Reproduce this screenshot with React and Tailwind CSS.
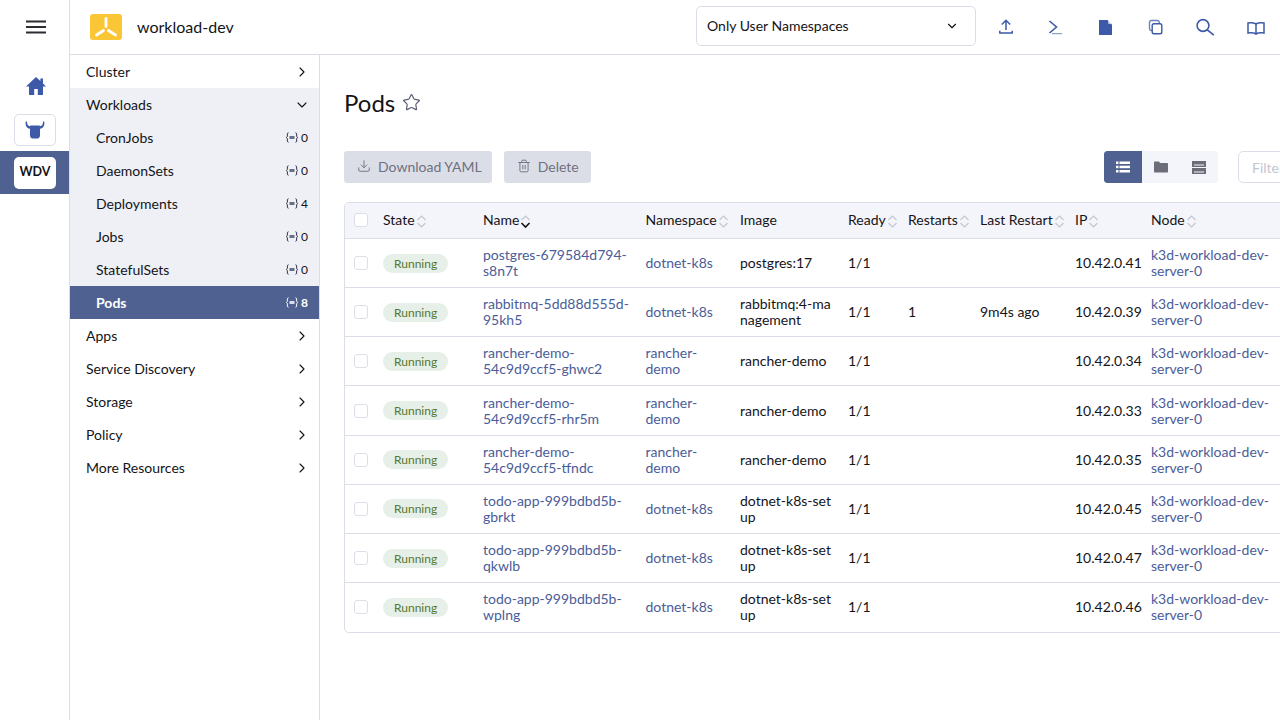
import { ChevronRight, ChevronDown, Star, Download, Trash2 } from "lucide-react";

const navTop = ["Cluster"];
const workloads = [
  { name: "CronJobs", count: 0 },
  { name: "DaemonSets", count: 0 },
  { name: "Deployments", count: 4 },
  { name: "Jobs", count: 0 },
  { name: "StatefulSets", count: 0 },
  { name: "Pods", count: 8, active: true },
];
const navBottom = ["Apps", "Service Discovery", "Storage", "Policy", "More Resources"];

const pods = [
  { name: ["postgres-679584d794-", "s8n7t"], ns: ["dotnet-k8s"], image: ["postgres:17"], ip: "10.42.0.41" },
  { name: ["rabbitmq-5dd88d555d-", "95kh5"], ns: ["dotnet-k8s"], image: ["rabbitmq:4-ma", "nagement"], restarts: "1", last: "9m4s ago", ip: "10.42.0.39" },
  { name: ["rancher-demo-", "54c9d9ccf5-ghwc2"], ns: ["rancher-", "demo"], image: ["rancher-demo"], ip: "10.42.0.34" },
  { name: ["rancher-demo-", "54c9d9ccf5-rhr5m"], ns: ["rancher-", "demo"], image: ["rancher-demo"], ip: "10.42.0.33" },
  { name: ["rancher-demo-", "54c9d9ccf5-tfndc"], ns: ["rancher-", "demo"], image: ["rancher-demo"], ip: "10.42.0.35" },
  { name: ["todo-app-999bdbd5b-", "gbrkt"], ns: ["dotnet-k8s"], image: ["dotnet-k8s-set", "up"], ip: "10.42.0.45" },
  { name: ["todo-app-999bdbd5b-", "qkwlb"], ns: ["dotnet-k8s"], image: ["dotnet-k8s-set", "up"], ip: "10.42.0.47" },
  { name: ["todo-app-999bdbd5b-", "wplng"], ns: ["dotnet-k8s"], image: ["dotnet-k8s-set", "up"], ip: "10.42.0.46" },
];

const columns = [
  { label: "State", width: "w-[100px]", sort: true },
  { label: "Name", width: "w-[162.5px]", sort: true, sorted: true },
  { label: "Namespace", width: "w-[94.5px]", sort: true },
  { label: "Image", width: "w-[108px]" },
  { label: "Ready", width: "w-[60px]", sort: true },
  { label: "Restarts", width: "w-[72px]", sort: true },
  { label: "Last Restart", width: "w-[95px]", sort: true },
  { label: "IP", width: "w-[76px]", sort: true },
  { label: "Node", width: "w-[180px]", sort: true },
];

const Lines = ({ lines }) => lines.map((l) => <div key={l} className="whitespace-nowrap">{l}</div>);

const SortIcon = ({ sorted }) => (
  <svg width="11" height="15" viewBox="0 0 11 15" fill="none" className="ml-[1px] mt-[2px] shrink-0">
    <path d="M1.5 6 5.5 2l4 4" stroke="#c3c6d2" strokeWidth="1.2" />
    <path d="M1.5 9l4 4 4-4" stroke={sorted ? "#141419" : "#c3c6d2"} strokeWidth={sorted ? 1.6 : 1.2} />
  </svg>
);

const Checkbox = () => (
  <div className="w-[14px] h-[14px] rounded-[3px] border border-[#dcdee7] bg-white" />
);

const ResourceGlyph = ({ active }) => (
  <svg width="12" height="11" viewBox="0 0 12 11" fill="none" stroke={active ? "#ffffff" : "#2f2f4a"} strokeWidth="1">
    <path d="M2.500.8C1.300.8 1.400 1.500 1.400 3c0 1.500-.3 2.200-1 2.500.7.300 1 1 1 2.500 0 1.500-.1 2.200 1.100 2.200" />
    <path d="M9.500.8c1.200 0 1.100.7 1.100 2.200 0 1.500.3 2.200 1 2.500-.7.300-1 1-1 2.500 0 1.500.1 2.200-1.100 2.200" />
    <rect x="3.500" y="4" width="5" height="3" fill={active ? "#d8dcec" : "#6b6f85"} stroke="none" />
  </svg>
);

const NavGroup = ({ label, open }) => (
  <div className={`h-[33px] flex items-center justify-between pl-4 pr-[9px] text-[14px] text-[#141419] ${open ? "bg-[#eef0f5]" : ""}`}>
    <span>{label}</span>
    {open ? (
      <ChevronDown size={16} strokeWidth={1.7} />
    ) : (
      <ChevronRight size={16} strokeWidth={1.7} />
    )}
  </div>
);

const Sidebar = () => (
  <nav className="w-[250px] shrink-0 border-r border-[#dcdee7]">
    {navTop.map((n) => (
      <NavGroup key={n} label={n} />
    ))}
    <NavGroup label="Workloads" open />
    <div className="bg-[#eef0f5]">
      {workloads.map((w) => (
        <div
          key={w.name}
          className={`h-[33px] flex items-center justify-between pl-[26px] pr-[11px] text-[14px] ${
            w.active ? "bg-[#4f6190] text-white font-bold" : "text-[#141419]"
          }`}
        >
          <span>{w.name}</span>
          <span className="flex items-center gap-[3px] text-[12px]">
            <ResourceGlyph active={w.active} />
            {w.count}
          </span>
        </div>
      ))}
    </div>
    {navBottom.map((n) => (
      <NavGroup key={n} label={n} />
    ))}
  </nav>
);

const Rail = () => (
  <aside className="w-[70px] shrink-0 border-r border-[#dcdee7] flex flex-col items-center">
    <div className="h-[54px] flex items-center justify-center pl-[2px]">
      <svg width="20" height="14" viewBox="0 0 20 14" fill="#2c2c33">
        <rect x="0" y="0.5" width="20" height="2" />
        <rect x="0" y="6" width="20" height="2" />
        <rect x="0" y="11.5" width="20" height="2" />
      </svg>
    </div>
    <div className="h-[60px] flex items-center justify-center pl-[2px]">
      <svg width="22" height="20" viewBox="0 0 22 20" fill="#3d5aa8" className="mt-[3px]">
        <path d="M11 1 1 10.5h3V19h5.2v-6h3.6v6H18v-8.5h3L18 7.6V2.5h-2.6v2.6z" />
      </svg>
    </div>
    <div className="w-[42px] h-[32px] rounded-[5px] border border-[#dcdee7] flex items-center justify-center">
      <svg width="22" height="18" viewBox="0 0 22 18" fill="#3d5aa8">
        <path d="M6 5.500c0-.6.4-1 1-1h8c.6 0 1 .4 1 1V14c0 2-1 3.500-2.500 3.500h-5C7 17.500 6 16 6 14z" />
        <path d="M1.800.5C1 4 2.500 7.200 6 7.800V5.200C4 5 3 3.500 3 .5z" />
        <path d="M20.200.5C21 4 19.500 7.200 16 7.800V5.200C18 5 19 3.500 19 .5z" />
      </svg>
    </div>
    <div className="mt-[5px] w-full h-[43px] bg-[#4f6190] flex items-center justify-center">
      <div className="w-[42px] h-[32px] bg-white rounded-[5px] flex items-center justify-center pl-[1px] text-[12.5px] font-bold text-[#141419]">
        WDV
      </div>
    </div>
  </aside>
);

const Header = () => (
  <header className="h-[55px] border-b border-[#dcdee7] flex items-center shrink-0">
    <div className="ml-[20px] w-[32px] h-[26px] rounded-[3px] bg-[#fbc636]">
      <svg width="32" height="26" viewBox="0 0 32 26" stroke="white" strokeWidth="2.8" strokeLinecap="round" fill="none">
        <path d="M16 4.500V12.500M13.500 16.500 6.500 21M18.500 16.500l7 4.500" />
      </svg>
    </div>
    <div className="ml-[15px] text-[16px] text-[#141419]">workload-dev</div>
    <div className="ml-auto mb-[2px] w-[280px] h-[40px] rounded-[5px] border border-[#dcdee7] flex items-center justify-between pl-[10px] pr-[16px] text-[14px] text-[#141419]">
      <span className="-mt-[1px]">Only User Namespaces</span>
      <ChevronDown size={14} strokeWidth={2} />
    </div>
    <div className="flex items-center ml-[5px] -mr-[1px] text-[#3d5aa8] mb-[2px] [&>div]:w-[50px] [&>div]:flex [&>div]:justify-center">
      <div>
        <svg width="20" height="20" viewBox="0 0 20 20" fill="none" stroke="currentColor" strokeWidth="1.5">
          <path d="M10 14V4.500M5.800 8.500 10 4.300l4.200 4.200M3.800 14.800v2.300h12.400v-2.300" />
        </svg>
      </div>
      <div>
        <svg width="20" height="20" viewBox="0 0 20 20" fill="none" stroke="currentColor">
          <path d="M3.500 5 10.500 11 3.500 17" strokeWidth="1.6" />
          <path d="M6 17.700H16" strokeWidth="1" opacity="0.7" />
        </svg>
      </div>
      <div>
        <svg width="20" height="20" viewBox="0 0 20 20" fill="currentColor">
          <path d="M3 4h8.500L16 8.500V19H3z" />
          <path d="M12.300 4.300v3.400h3.400z" fill="#e8ebf6" />
        </svg>
      </div>
      <div>
        <svg width="20" height="20" viewBox="0 0 20 20" fill="none" stroke="currentColor" strokeWidth="1.4">
          <rect x="6.200" y="7.700" width="9.600" height="10" rx="1.800" />
          <path d="M6 14.500H5.200A2 2 0 0 1 3.500 12.700V6.500A2 2 0 0 1 5.500 4.500H11.500A2 2 0 0 1 13.300 6.500V7.500" opacity="0.75" />
        </svg>
      </div>
      <div>
        <svg width="20" height="20" viewBox="0 0 20 20" fill="none" stroke="currentColor" strokeWidth="1.6">
          <circle cx="7" cy="9.500" r="5.900" />
          <path d="M11.300 13.800 17.800 19.200" />
        </svg>
      </div>
      <div>
        <svg width="20" height="20" viewBox="0 0 20 20" fill="none" stroke="currentColor" strokeWidth="1.5">
          <path d="M10 8C8 6.800 5 6.500 2 7V17c3-.5 6-.3 8 1 2-1.300 5-1.500 8-1V7c-3-.5-6-.2-8 1zM10 8V18" />
        </svg>
      </div>
    </div>
  </header>
);

const Toolbar = () => (
  <div className="flex items-center">
    <button className="h-[32px] pl-[13px] pr-[10px] pb-[2px] rounded-[3px] bg-[#dcdee7] text-[#6e7180] text-[14px] flex items-center gap-[7px]">
      <Download size={14} strokeWidth={1.6} />
      Download YAML
    </button>
    <button className="ml-[12px] h-[32px] pl-[13px] pr-[12px] pb-[2px] rounded-[3px] bg-[#dcdee7] text-[#6e7180] text-[14px] flex items-center gap-[7px]">
      <Trash2 size={14} strokeWidth={1.6} />
      Delete
    </button>
    <div className="ml-auto flex h-[32px] rounded-[3px] bg-[#f4f5fa] overflow-hidden">
      <div className="w-[38px] bg-[#4f6190] rounded-l-[3px] flex items-center justify-center">
        <svg width="14" height="12" viewBox="0 0 14 12" fill="white">
          <rect x="0" y="0.500" width="2.500" height="2.500" />
          <rect x="3.500" y="0.500" width="10.500" height="2.500" />
          <rect x="0" y="4.700" width="2.500" height="2.500" />
          <rect x="3.500" y="4.700" width="10.500" height="2.500" />
          <rect x="0" y="9" width="2.500" height="2.500" />
          <rect x="3.500" y="9" width="10.500" height="2.500" />
        </svg>
      </div>
      <div className="w-[38px] flex items-center justify-center">
        <svg width="14" height="12" viewBox="0 0 14 12" fill="#6b6d78">
          <path d="M0 1.500C0 .9.400.500 1 .500h3.800L6.300 2H13c.6 0 1 .4 1 1v7.500c0 .6-.4 1-1 1H1c-.6 0-1-.4-1-1z" />
        </svg>
      </div>
      <div className="w-[38px] flex items-center justify-center">
        <svg width="14" height="13" viewBox="0 0 14 13" fill="#6b6d78">
          <rect x="0" y="0" width="14" height="6" />
          <rect x="0" y="7" width="14" height="6" />
          <rect x="2" y="3.500" width="10" height="1" fill="#f4f5fa" />
          <rect x="2" y="10.500" width="10" height="1" fill="#f4f5fa" />
        </svg>
      </div>
    </div>
    <div className="ml-[20px] w-[120px] -mr-[140px] shrink-0 h-[32px] rounded-[5px] border border-[#dcdee7] pl-[13px] flex items-center text-[14px] text-[#c3c6d2]">
      Filter
    </div>
  </div>
);

const PodsTable = () => (
  <div className="mt-[19px] w-[977px] rounded-[5px] border border-[#dcdee7] overflow-hidden">
    <table className="table-fixed w-[975px] border-collapse text-[14px] leading-[16px] text-[#141419]">
      <thead>
        <tr className="h-[35.5px] bg-[#f4f5fa] border-b border-[#dcdee7]">
          <th className="w-[28px] pl-[9px] pb-[1px] text-left font-normal">
            <Checkbox />
          </th>
          {columns.map((c) => (
            <th key={c.label} className={`${c.width} px-[10px] pb-[1px] text-left font-normal`}>
              <div className="flex items-center whitespace-nowrap">
                {c.label}
                {c.sort && <SortIcon sorted={c.sorted} />}
              </div>
            </th>
          ))}
        </tr>
      </thead>
      <tbody>
        {pods.map((p, i) => (
          <tr key={p.name.join("")} className={`h-[49.17px] ${i < pods.length - 1 ? "border-b border-[#dcdee7]" : ""}`}>
            <td className="pl-[9px]">
              <Checkbox />
            </td>
            <td className="px-[10px]">
              <span className="inline-block h-[19px] leading-[19px] rounded-[10px] bg-[#e6efe8] text-[#56782f] text-[12px] px-[11px]">
                Running
              </span>
            </td>
            <td className="px-[10px] text-[#4a5d99]">
              <Lines lines={p.name} />
            </td>
            <td className="px-[10px] text-[#4a5d99]">
              <Lines lines={p.ns} />
            </td>
            <td className="px-[10px]">
              <Lines lines={p.image} />
            </td>
            <td className="px-[10px]">1/1</td>
            <td className="px-[10px]">{p.restarts}</td>
            <td className="px-[10px] whitespace-nowrap">{p.last}</td>
            <td className="px-[10px]">{p.ip}</td>
            <td className="px-[10px] text-[#4a5d99] whitespace-nowrap">
              <div>k3d-workload-dev-</div>
              <div>server-0</div>
            </td>
          </tr>
        ))}
      </tbody>
    </table>
  </div>
);

const App = () => (
  <div className="w-[1280px] h-[720px] flex overflow-hidden bg-white font-['Lato','Noto_Sans',sans-serif]">
    <Rail />
    <div className="flex-1 min-w-0 flex flex-col">
      <Header />
      <div className="flex-1 flex min-h-0">
        <Sidebar />
        <main className="flex-1 min-w-0 pl-[24px] pr-[62px] overflow-hidden">
          <div className="flex items-center h-[32px] mt-[32px] mb-[32px] gap-[7px]">
            <h1 className="text-[24px] text-[#141419]">Pods</h1>
            <Star size={19} strokeWidth={1.5} className="text-[#5a5f7a] -mt-[2px]" />
          </div>
          <Toolbar />
          <PodsTable />
        </main>
      </div>
    </div>
  </div>
);

export default App;
